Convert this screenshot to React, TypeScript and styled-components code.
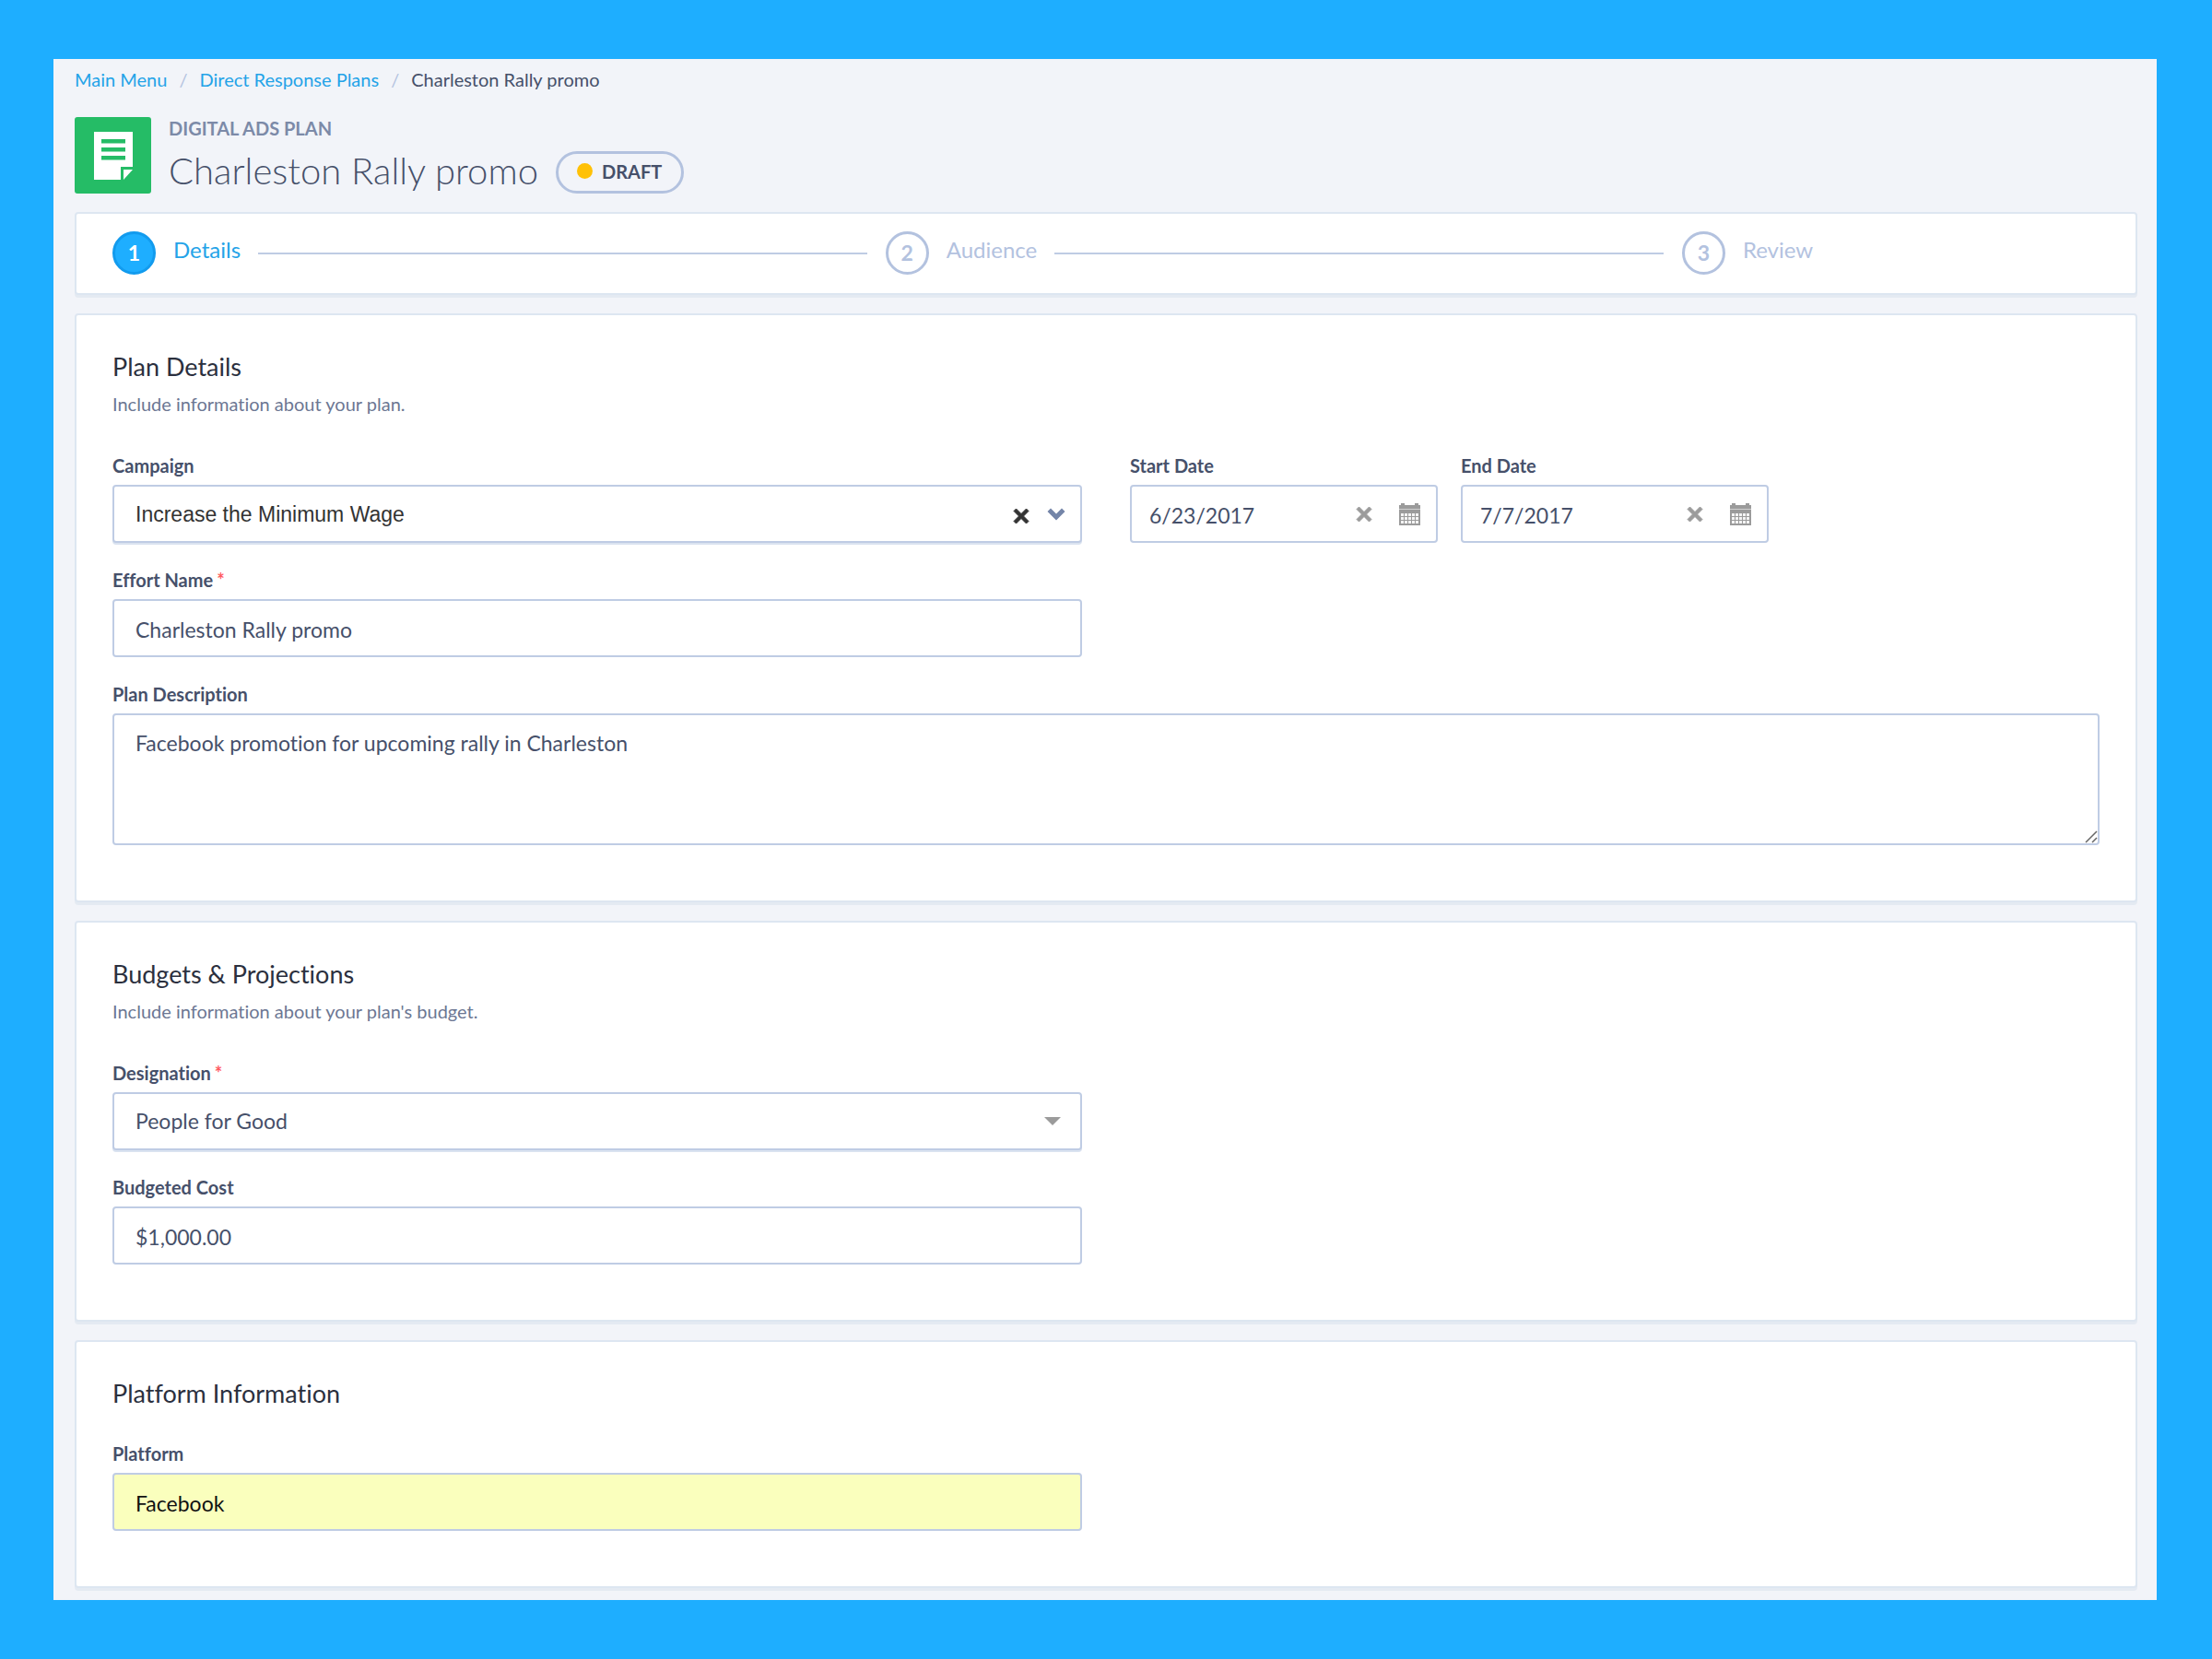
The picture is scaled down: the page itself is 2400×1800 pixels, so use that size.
import React, { useState } from "react";
import styled, { createGlobalStyle, css } from "styled-components";

const color = {
  sky: "#1eaeff",
  skyDark: "#129bee",
  link: "#24a3e8",
  page: "#f2f4f9",
  cardBorder: "#dde6f1",
  cardShadow: "#e4eaf2",
  field: "#bfcce4",
  fieldShadow: "#dae3f0",
  muted: "#b3c2df",
  heading: "#2b303e",
  text: "#46506a",
  soft: "#6c7793",
  eyebrow: "#7c8aa8",
  green: "#25bc66",
  amber: "#ffc107",
  required: "#ff5a5f",
  grey: "#9b9b9b",
  autofill: "#faffbd",
};

const GlobalStyle = createGlobalStyle`
  *, *::before, *::after { box-sizing: border-box; }
  body {
    margin: 0;
    background: ${color.sky};
    color: ${color.text};
    font-family: Lato, "Open Sans", sans-serif;
    font-size: 20px;
    font-variant-ligatures: none;
    line-height: 24px;
  }
  h1, h2, p, ol { margin: 0; padding: 0; }
  button, input, select, textarea { font: inherit; color: inherit; margin: 0; }
`;

const Page = styled.main`
  margin: 64px 60px 64px 58px;
  padding: 10px 21px 13px 23px;
  background: ${color.page};
`;

const Crumbs = styled.ol`
  display: flex;
  gap: 13px;
  list-style: none;
`;

const Crumb = styled.li`
  display: flex;
  gap: 13px;

  & + &::before {
    content: "/";
    color: ${color.muted};
  }
`;

const CrumbLink = styled.a`
  color: ${color.link};
  text-decoration: none;
`;

const Header = styled.header`
  display: flex;
  gap: 19px;
  margin: 29px 0 20px;
`;

const Tile = styled.div`
  display: grid;
  place-items: center;
  width: 83px;
  height: 83px;
  border-radius: 3px;
  background: ${color.green};
`;

const Titles = styled.div`
  display: flex;
  flex-direction: column;
  justify-content: space-between;
`;

const Eyebrow = styled.p`
  color: ${color.eyebrow};
  font-weight: 700;
  text-transform: uppercase;
`;

const TitleRow = styled.div`
  display: flex;
  align-items: flex-end;
  gap: 19px;
`;

const Title = styled.h1`
  font-size: 40px;
  font-weight: 300;
  line-height: 50px;
`;

const Pill = styled.span`
  display: flex;
  align-items: center;
  gap: 10px;
  height: 46px;
  padding: 0 21px 3px 20px;
  border: 3px solid ${color.muted};
  border-radius: 23px;
  font-weight: 700;

  &::before {
    content: "";
    width: 17px;
    height: 17px;
    border-radius: 50%;
    background: ${color.amber};
  }
`;

const Card = styled.section`
  padding: 39px 39px 60px;
  border: 2px solid ${color.cardBorder};
  border-radius: 4px;
  background: #fff;
  box-shadow: 0 3px 0 ${color.cardShadow};

  & + & { margin-top: 20px; }
`;

const StepsCard = styled(Card)`
  padding: 19px 39px 20px;
`;

const Steps = styled.ol`
  display: flex;
  list-style: none;
`;

const Step = styled.li<{ $active?: boolean }>`
  display: flex;
  flex: 17 0 auto;
  align-items: center;
  gap: 19px;
  color: ${(p) => (p.$active ? color.link : color.muted)};

  &:last-child { flex-grow: 8; }

  &:not(:last-child)::after {
    content: "";
    flex: 1;
    height: 2px;
    margin-right: 20px;
    background: ${color.field};
  }
`;

const StepNumber = styled.span<{ $active?: boolean }>`
  display: grid;
  place-items: center;
  width: 47px;
  height: 47px;
  padding-bottom: 2px;
  border: 3px solid ${color.muted};
  border-radius: 50%;
  font-size: 23px;
  font-weight: 700;

  ${(p) =>
    p.$active &&
    css`
      border-color: ${color.skyDark};
      background: ${color.sky};
      color: #fff;
    `}
`;

const StepLabel = styled.span`
  padding-bottom: 8px;
  font-size: 24px;
`;

const CardTitle = styled.h2`
  color: ${color.heading};
  font-size: 27px;
  font-weight: 400;
  line-height: 34px;
`;

const CardText = styled.p`
  margin-top: 11px;
  color: ${color.soft};
`;

const Fields = styled.div<{ $afterTitle?: boolean }>`
  display: grid;
  grid-template-columns: 1fr 1fr;
  gap: 28px 52px;
  margin-top: ${(p) => (p.$afterTitle ? 36 : 43)}px;
`;

const DateFields = styled.div`
  display: grid;
  grid-template-columns: repeat(3, 1fr);
  gap: 25px;
`;

const Field = styled.div<{ $wide?: boolean }>`
  display: flex;
  flex-direction: column;
  gap: 9px;
  grid-column: ${(p) => (p.$wide ? "1 / -1" : "1")};

  ${DateFields} & { grid-column: auto; }
`;

const Label = styled.label`
  font-weight: 700;
`;

const Required = styled.span`
  margin-left: 4px;
  color: ${color.required};
`;

const Control = styled.div`
  position: relative;
  display: flex;
`;

const fieldBox = css`
  width: 100%;
  border: 2px solid ${color.field};
  border-radius: 4px;
  outline: none;
  background: #fff;
  font-size: 23px;
  font-variant-ligatures: none;
  line-height: 28px;
`;

const Input = styled.input<{ $filled?: boolean; $date?: boolean }>`
  ${fieldBox}
  height: 63px;
  padding: 2px ${(p) => (p.$date ? 110 : 23)}px 0 ${(p) => (p.$date ? 19 : 23)}px;
  ${(p) =>
    p.$filled &&
    css`
      background: ${color.autofill};
      color: #111;
    `}
`;

const Select = styled.select<{ $plain?: boolean }>`
  ${fieldBox}
  height: 63px;
  padding: 0 84px ${(p) => (p.$plain ? 0 : 2)}px 23px;
  appearance: none;
  box-shadow: 0 2px 0 ${color.fieldShadow};
  ${(p) =>
    p.$plain &&
    css`
      color: #333;
      font-family: "Liberation Sans", Arial, sans-serif;
    `}
`;

const TextArea = styled.textarea`
  ${fieldBox}
  display: block;
  height: 143px;
  padding: 16px 23px;
  resize: none;
`;

const Adornments = styled.div<{ $gap: number; $right: number }>`
  position: absolute;
  top: 0;
  right: ${(p) => p.$right}px;
  bottom: 0;
  display: flex;
  align-items: center;
  gap: ${(p) => p.$gap}px;
  pointer-events: none;
`;

const Grip = styled.svg`
  position: absolute;
  right: 2px;
  bottom: 2px;
  pointer-events: none;
`;

const IconButton = styled.button<{ $dark?: boolean }>`
  display: flex;
  padding: ${(p) => (p.$dark ? 5 : 0)}px 0 0;
  border: 0;
  background: none;
  color: ${(p) => (p.$dark ? "#333" : color.grey)};
  cursor: pointer;
  pointer-events: auto;
`;

const DocumentIcon = () => (
  <svg width="44" height="54" viewBox="0 0 44 54" aria-hidden="true">
    <path d="M1 1h42v38H30v14H1z" fill="#fff" />
    <path d="M33 42h10L33 53z" fill="#fff" />
    <path d="M9 9h26v4.500H9zM9 18h26v4.500H9zM9 27h26v4.500H9z" fill={color.green} />
  </svg>
);

const CloseIcon = () => (
  <svg width="18" height="18" viewBox="0 0 18 18" aria-hidden="true">
    <path
      d="M3.500 1 9 6.500 14.500 1 17 3.500 11.500 9 17 14.500 14.500 17 9 11.500 3.500 17 1 14.500 6.500 9 1 3.500z"
      fill="currentColor"
      stroke="currentColor"
      strokeLinejoin="round"
    />
  </svg>
);

const ChevronIcon = () => (
  <svg width="20" height="14" viewBox="0 0 20 14" aria-hidden="true">
    <path d="M.5 4 4 .5l6 6 6-6L19.500 4 10 13.500z" fill="#7485a8" />
  </svg>
);

const CaretIcon = () => (
  <svg width="18" height="9" viewBox="0 0 18 9" aria-hidden="true">
    <path d="M0 0h18L9 9z" fill={color.grey} />
  </svg>
);

const CalendarIcon = () => (
  <svg width="23" height="24" viewBox="0 0 23 24" aria-hidden="true">
    <path d="M0 2h2V0h4v2h11V0h4v2h2v4H0z" fill="currentColor" />
    <path d="M0 6h23v1H0z" fill="#d0d0d0" />
    <path d="M0 7h23v17H0z" fill="currentColor" />
    <path
      d="M2 11h3v3H2zm4 0h3v3H6zm4 0h3v3h-3zm4 0h3v3h-3zm4 0h3v3h-3zM2 15h3v3H2zm4 0h3v3H6zm4 0h3v3h-3zm4 0h3v3h-3zm4 0h3v3h-3zM2 19h3v3H2zm4 0h3v3H6zm4 0h3v3h-3zm4 0h3v3h-3zm4 0h3v3h-3z"
      fill="#f4f4f4"
    />
  </svg>
);

interface DateFieldProps {
  id: string;
  label: string;
  initial: string;
}

function DateField({ id, label, initial }: DateFieldProps) {
  const [value, setValue] = useState(initial);
  return (
    <Field>
      <Label htmlFor={id}>{label}</Label>
      <Control>
        <Input $date id={id} type="text" value={value} onChange={(e) => setValue(e.target.value)} />
        <Adornments $gap={29} $right={19}>
          <IconButton type="button" aria-label={`Clear ${label}`} onClick={() => setValue("")}>
            <CloseIcon />
          </IconButton>
          <IconButton type="button" aria-label={`Open ${label} calendar`}>
            <CalendarIcon />
          </IconButton>
        </Adornments>
      </Control>
    </Field>
  );
}

export default function App() {
  const [campaign, setCampaign] = useState("wage");

  return (
    <>
      <GlobalStyle />
      <Page>
        <nav aria-label="Breadcrumb">
          <Crumbs>
            <Crumb><CrumbLink href="#menu">Main Menu</CrumbLink></Crumb>
            <Crumb><CrumbLink href="#plans">Direct Response Plans</CrumbLink></Crumb>
            <Crumb aria-current="page">Charleston Rally promo</Crumb>
          </Crumbs>
        </nav>

        <Header>
          <Tile><DocumentIcon /></Tile>
          <Titles>
            <Eyebrow>Digital Ads Plan</Eyebrow>
            <TitleRow>
              <Title>Charleston Rally promo</Title>
              <Pill>DRAFT</Pill>
            </TitleRow>
          </Titles>
        </Header>

        <StepsCard>
          <Steps>
            <Step $active aria-current="step">
              <StepNumber $active>1</StepNumber>
              <StepLabel>Details</StepLabel>
            </Step>
            <Step>
              <StepNumber>2</StepNumber>
              <StepLabel>Audience</StepLabel>
            </Step>
            <Step>
              <StepNumber>3</StepNumber>
              <StepLabel>Review</StepLabel>
            </Step>
          </Steps>
        </StepsCard>

        <Card>
          <CardTitle>Plan Details</CardTitle>
          <CardText>Include information about your plan.</CardText>
          <Fields>
            <Field>
              <Label htmlFor="campaign">Campaign</Label>
              <Control>
                <Select $plain id="campaign" value={campaign} onChange={(e) => setCampaign(e.target.value)}>
                  <option value="" />
                  <option value="wage">Increase the Minimum Wage</option>
                </Select>
                <Adornments $gap={19} $right={18}>
                  <IconButton $dark type="button" aria-label="Clear Campaign" onClick={() => setCampaign("")}>
                    <CloseIcon />
                  </IconButton>
                  <ChevronIcon />
                </Adornments>
              </Control>
            </Field>
            <DateFields>
              <DateField id="start" label="Start Date" initial="6/23/2017" />
              <DateField id="end" label="End Date" initial="7/7/2017" />
            </DateFields>
            <Field>
              <Label htmlFor="effort">Effort Name<Required>*</Required></Label>
              <Input id="effort" type="text" required defaultValue="Charleston Rally promo" />
            </Field>
            <Field $wide>
              <Label htmlFor="description">Plan Description</Label>
              <Control>
                <TextArea id="description" defaultValue="Facebook promotion for upcoming rally in Charleston" />
                <Grip width="14" height="14" viewBox="0 0 14 14" aria-hidden="true">
                  <path d="M1 13 13 1M8 13l5-5" fill="none" stroke="#666" strokeWidth="1.500" />
                </Grip>
              </Control>
            </Field>
          </Fields>
        </Card>

        <Card>
          <CardTitle>Budgets &amp; Projections</CardTitle>
          <CardText>Include information about your plan's budget.</CardText>
          <Fields>
            <Field>
              <Label htmlFor="designation">Designation<Required>*</Required></Label>
              <Control>
                <Select id="designation" required defaultValue="good">
                  <option value="good">People for Good</option>
                </Select>
                <Adornments $gap={19} $right={23}>
                  <CaretIcon />
                </Adornments>
              </Control>
            </Field>
            <Field>
              <Label htmlFor="cost">Budgeted Cost</Label>
              <Input id="cost" type="text" defaultValue="$1,000.00" />
            </Field>
          </Fields>
        </Card>

        <Card>
          <CardTitle>Platform Information</CardTitle>
          <Fields $afterTitle>
            <Field>
              <Label htmlFor="platform">Platform</Label>
              <Input $filled id="platform" type="text" defaultValue="Facebook" />
            </Field>
          </Fields>
        </Card>
      </Page>
    </>
  );
}
